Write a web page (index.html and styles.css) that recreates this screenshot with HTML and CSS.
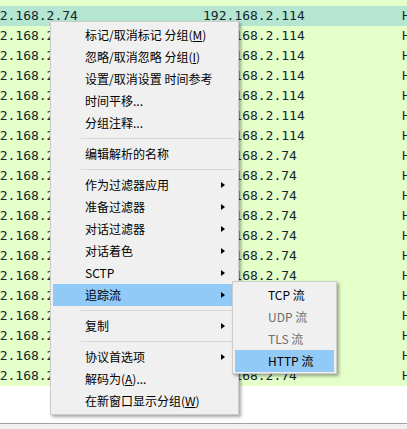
FILE: index.html
```html
<!DOCTYPE html>
<html lang="zh-CN">
<head>
<meta charset="utf-8">
<title>Packet list context menu</title>
<link rel="stylesheet" href="styles.css">
</head>
<body>
<div class="packets">
  <div class="row"><span>192.168.2.114</span><span>192.168.2.74</span><span>HTTP</span></div>
  <div class="row selected"><span>192.168.2.74</span><span>192.168.2.114</span><span>HTTP</span></div>
  <div class="row"><span>192.168.2.74</span><span>192.168.2.114</span><span>HTTP</span></div>
  <div class="row"><span>192.168.2.74</span><span>192.168.2.114</span><span>HTTP</span></div>
  <div class="row"><span>192.168.2.74</span><span>192.168.2.114</span><span>HTTP</span></div>
  <div class="row"><span>192.168.2.74</span><span>192.168.2.114</span><span>HTTP</span></div>
  <div class="row"><span>192.168.2.74</span><span>192.168.2.114</span><span>HTTP</span></div>
  <div class="row"><span>192.168.2.74</span><span>192.168.2.114</span><span>HTTP</span></div>
  <div class="row"><span>192.168.2.114</span><span>192.168.2.74</span><span>HTTP</span></div>
  <div class="row"><span>192.168.2.114</span><span>192.168.2.74</span><span>HTTP</span></div>
  <div class="row"><span>192.168.2.114</span><span>192.168.2.74</span><span>HTTP</span></div>
  <div class="row"><span>192.168.2.114</span><span>192.168.2.74</span><span>HTTP</span></div>
  <div class="row"><span>192.168.2.114</span><span>192.168.2.74</span><span>HTTP</span></div>
  <div class="row"><span>192.168.2.114</span><span>192.168.2.74</span><span>HTTP</span></div>
  <div class="row"><span>192.168.2.114</span><span>192.168.2.74</span><span>HTTP</span></div>
  <div class="row"><span>192.168.2.114</span><span>192.168.2.74</span><span>HTTP</span></div>
  <div class="row"><span>192.168.2.114</span><span>192.168.2.74</span><span>HTTP</span></div>
  <div class="row"><span>192.168.2.114</span><span>192.168.2.74</span><span>HTTP</span></div>
  <div class="row"><span>192.168.2.114</span><span>192.168.2.74</span><span>HTTP</span></div>
  <div class="row"><span>192.168.2.114</span><span>192.168.2.74</span><span>HTTP</span></div>
</div>
<div class="blank"></div>
<div class="status"></div>

<div class="menu main-menu">
  <div class="item">标记/取消标记 分组(<u>M</u>)</div>
  <div class="item">忽略/取消忽略 分组(<u>I</u>)</div>
  <div class="item">设置/取消设置 时间参考</div>
  <div class="item">时间平移...</div>
  <div class="item">分组注释...</div>
  <div class="sep"></div>
  <div class="item">编辑解析的名称</div>
  <div class="sep"></div>
  <div class="item">作为过滤器应用<span class="arrow"></span></div>
  <div class="item">准备过滤器<span class="arrow"></span></div>
  <div class="item">对话过滤器<span class="arrow"></span></div>
  <div class="item">对话着色<span class="arrow"></span></div>
  <div class="item">SCTP<span class="arrow"></span></div>
  <div class="item active">追踪流<span class="arrow"></span></div>
  <div class="sep"></div>
  <div class="item">复制<span class="arrow"></span></div>
  <div class="sep"></div>
  <div class="item">协议首选项<span class="arrow"></span></div>
  <div class="item">解码为(<u>A</u>)...</div>
  <div class="item">在新窗口显示分组(<u>W</u>)</div>
</div>

<div class="menu sub-menu">
  <div class="item">TCP 流</div>
  <div class="item disabled">UDP 流</div>
  <div class="item disabled">TLS 流</div>
  <div class="item active">HTTP 流</div>
</div>
</body>
</html>
```

FILE: styles.css
```css
html, body {
  margin: 0;
  padding: 0;
}

body {
  width: 407px;
  height: 429px;
  overflow: hidden;
  background: #ffffff;
  position: relative;
}

.packets {
  margin-top: -14px;
  margin-left: -16px;
  font-family: "DejaVu Sans Mono", "Liberation Mono", monospace;
  font-size: 13px;
  color: #12272e;
}

.row {
  display: grid;
  grid-template-columns: 219px 199px auto;
  height: 20px;
  line-height: 20px;
  background: #e4ffc7;
  white-space: nowrap;
  overflow: hidden;
}

.row.selected {
  background: #b5e6d1;
}

.blank {
  height: 37px;
  background: #ffffff;
}

.status {
  border-top: 1px solid #a0a0a0;
  height: 10px;
  background: #f0f0f0;
}

.menu {
  position: absolute;
  background: #f0f0f0;
  border: 1px solid #cccccc;
  padding: 2px;
  box-shadow: 2px 2px 3px rgba(0, 0, 0, 0.35);
  font-family: "Noto Sans CJK SC", "Noto Sans", sans-serif;
  font-size: 12px;
  color: #000000;
}

.main-menu {
  left: 50px;
  top: 21px;
  width: 183px;
}

.sub-menu {
  left: 232px;
  top: 281px;
  width: 99px;
  padding-bottom: 1px;
}

.item {
  display: flex;
  align-items: center;
  height: 22px;
  line-height: 22px;
  padding-left: 32px;
  white-space: nowrap;
}

.sub-menu .item {
  padding-left: 33px;
}

.item.active {
  background: #91c9f7;
}

.item.disabled {
  color: #6d6d6d;
}

.item u {
  text-decoration: underline;
  text-underline-offset: 1px;
}

.arrow {
  margin-left: auto;
  margin-right: 11px;
  width: 0;
  height: 0;
  border-left: 4px solid #000000;
  border-top: 3px solid transparent;
  border-bottom: 3px solid transparent;
}

.sep {
  height: 9px;
  display: flex;
  align-items: center;
  padding-left: 28px;
  padding-right: 1px;
}

.sep::before {
  content: "";
  flex: 1;
  height: 1px;
  background: #d7d7d7;
}
```
